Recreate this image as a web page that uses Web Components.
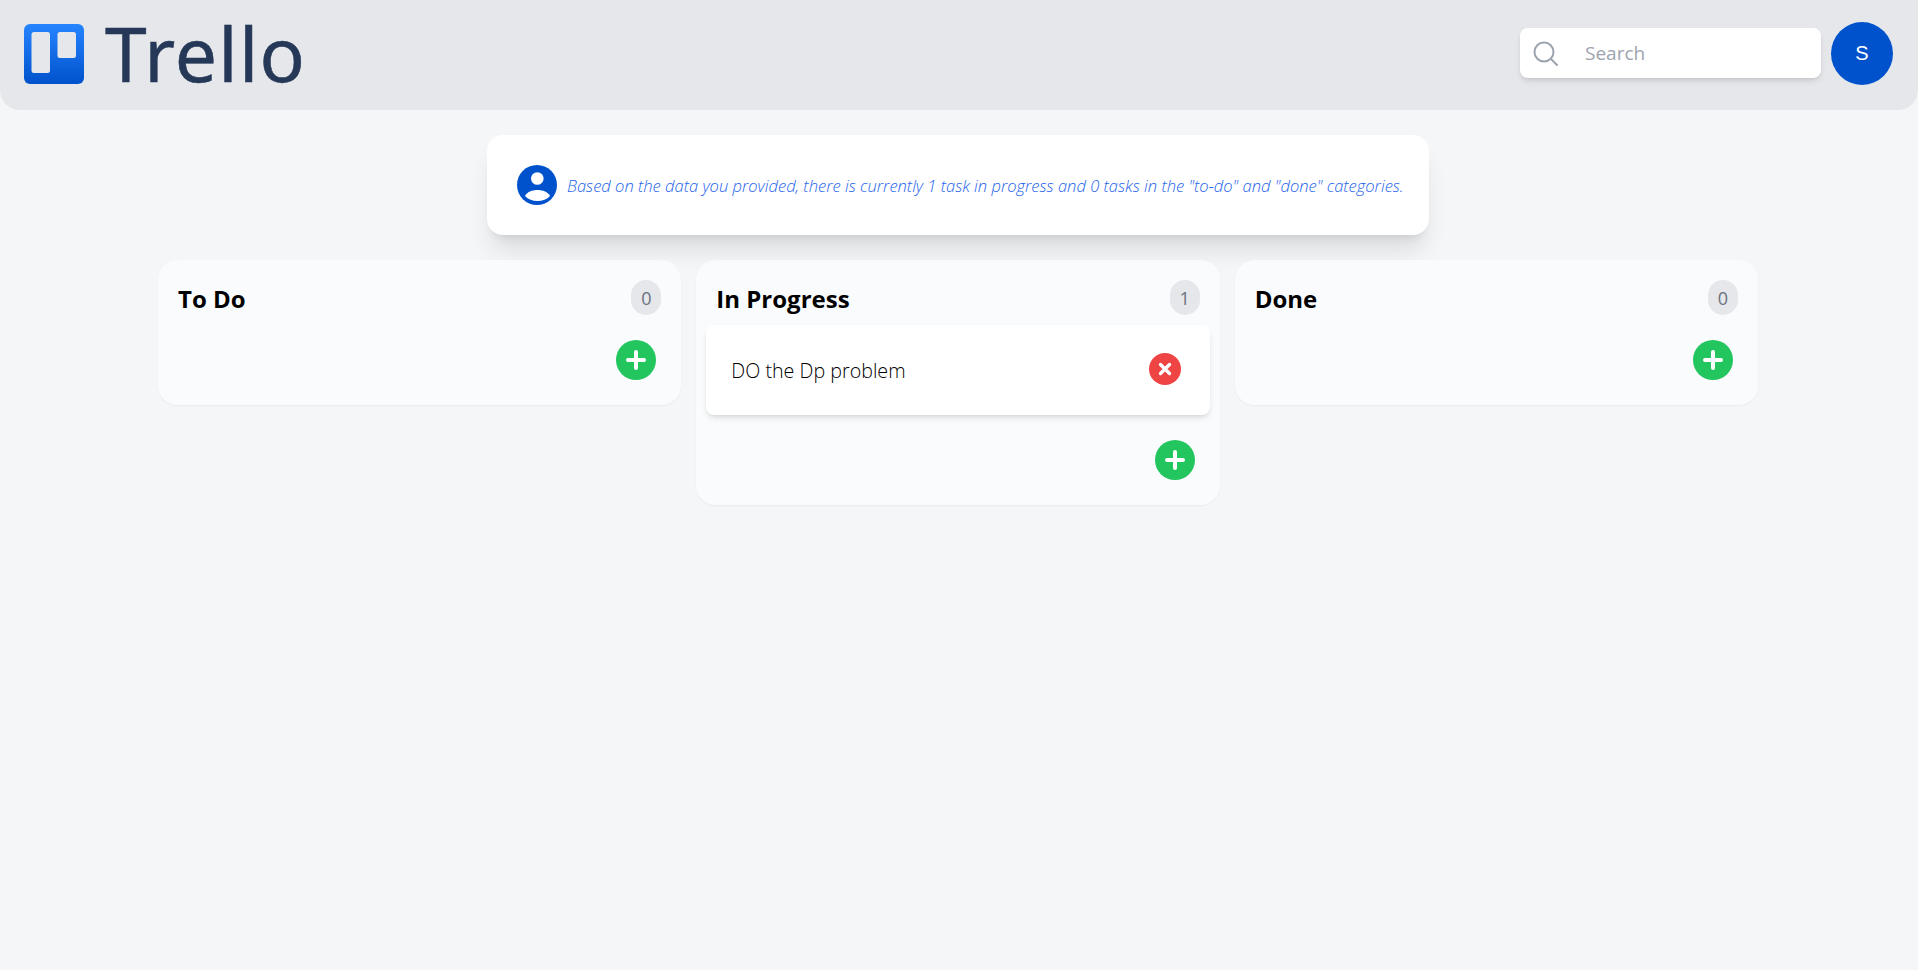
<!DOCTYPE html>
<html lang="en">
<head>
<meta charset="utf-8">
<title>Trello</title>
<style>
    html, body{margin: 0; padding: 0; height: 100%;}
    body{background: #f5f6f8; font-family: "Open Sans", "Noto Sans", sans-serif; color: #000;}
</style>
</head>
<body>
<board-app></board-app>

<script>
/** Logo y nombre de la aplicación. */
class BrandLogo extends HTMLElement{
    constructor(){
        super();
        this.attachShadow({mode: 'open'});
    }

    connectedCallback() {
        this.shadowRoot.innerHTML = `
            <style>
                :host{display: flex; align-items: center; gap: 21px; margin-top: 1px;}
                svg{display: block; width: 60px; height: 60px;}
                span{font: 400 75px/1 "Noto Sans", sans-serif; color: #253858; letter-spacing: 1.2px; margin-top: -2px;
                    -webkit-text-stroke: 0.5px #253858;}
            </style>
            <svg viewBox="0 0 60 60">
                <defs>
                    <linearGradient id="g" x1="0" y1="0" x2="0" y2="1">
                        <stop offset="0" stop-color="#2684ff"/>
                        <stop offset="1" stop-color="#0052cc"/>
                    </linearGradient>
                </defs>
                <rect width="60" height="60" rx="6" fill="url(#g)"/>
                <rect x="7.5" y="8" width="18.5" height="41" rx="2.5" fill="#e5e7eb"/>
                <rect x="33.5" y="8" width="18.5" height="26" rx="2.5" fill="#e5e7eb"/>
            </svg>
            <span>Trello</span>
        `;
    }
}
customElements.define('brand-logo', BrandLogo);

/** Caja de búsqueda de la barra superior. */
class SearchBox extends HTMLElement{
    constructor(){
        super();
        this.attachShadow({mode: 'open'});
    }

    connectedCallback() {
        this.shadowRoot.innerHTML = `
            <style>
                :host{display: flex; align-items: center; width: 301px; height: 50px; box-sizing: border-box; padding-left: 13px;
                    margin-bottom: 1px; background: #fff; border-radius: 8px;
                    box-shadow: 0 4px 6px -1px rgba(0,0,0,.1), 0 2px 4px -2px rgba(0,0,0,.1);}
                svg{display: block; flex: none; width: 25px; height: 25px;}
                input{flex: 1; min-width: 0; border: 0; outline: 0; background: none; margin-left: 27px; padding: 0;
                    font: 400 19px "Open Sans", sans-serif; color: #111827;}
                input::placeholder{color: #9ca3af; opacity: 1;}
            </style>
            <svg viewBox="0 0 25 25" fill="none" stroke="#9ca3af" stroke-width="2" stroke-linecap="round">
                <circle cx="11" cy="11" r="9.5"/>
                <path d="M18 18l6 6"/>
            </svg>
            <input type="text" placeholder="Search">
        `;
    }
}
customElements.define('search-box', SearchBox);

/** Barra superior. */
class TopBar extends HTMLElement{
    constructor(){
        super();
        this.attachShadow({mode: 'open'});
    }

    connectedCallback() {
        this.shadowRoot.innerHTML = `
            <style>
                :host{display: flex; align-items: center; justify-content: space-between; height: 110px; box-sizing: border-box;
                    padding: 0 25px 3px 24px; background: #e5e7eb; border-radius: 0 0 20px 20px;}
                .right{display: flex; align-items: center; gap: 10px;}
                .avatar{width: 62px; height: 63px; border-radius: 50%; background: #0052cc; color: #fff; display: flex;
                    align-items: center; justify-content: center; font: 400 20px "Liberation Sans", sans-serif;}
            </style>
            <brand-logo></brand-logo>
            <div class="right">
                <search-box></search-box>
                <div class="avatar">S</div>
            </div>
        `;
    }
}
customElements.define('top-bar', TopBar);

/** Tarjeta con el resumen de las tareas. */
class SummaryCard extends HTMLElement{
    constructor(){
        super();
        this.attachShadow({mode: 'open'});
    }

    connectedCallback() {
        this.shadowRoot.innerHTML = `
            <style>
                :host{display: flex; align-items: center; gap: 10px; width: 942px; height: 100px; box-sizing: border-box;
                    padding: 0 25px 0 30px; background: #fff; border-radius: 16px;
                    box-shadow: 0 20px 25px -5px rgba(0,0,0,.1), 0 8px 10px -6px rgba(0,0,0,.1);}
                svg{display: block; flex: none; width: 40px; height: 40px;}
                p{margin: 0; white-space: nowrap; font: italic 300 16.56px "Open Sans", sans-serif; color: #2563eb;}
            </style>
            <svg viewBox="0 0 40 40">
                <circle cx="20" cy="20" r="20" fill="#0052cc"/>
                <circle cx="20.3" cy="13.5" r="6.3" fill="#fff"/>
                <path d="M8 31C10 27 15 25 20.5 25C26 25 31 27 33 31C30 34.5 25.5 36 20.5 36C15.5 36 11 34.5 8 31Z" fill="#fff"/>
            </svg>
            <p><slot></slot></p>
        `;
    }
}
customElements.define('summary-card', SummaryCard);

/** Tarea individual de una columna. */
class TaskCard extends HTMLElement{
    constructor(){
        super();
        this.attachShadow({mode: 'open'});
    }

    connectedCallback() {
        this.shadowRoot.innerHTML = `
            <style>
                :host{display: flex; align-items: center; justify-content: space-between; height: 90px; box-sizing: border-box;
                    margin-bottom: 10px; padding: 0 29px 0 25px; background: #fff; border-radius: 8px;
                    box-shadow: 0 4px 6px -1px rgba(0,0,0,.1), 0 2px 4px -2px rgba(0,0,0,.1);}
                span{font: 300 19.7px "Open Sans", sans-serif; color: #000; margin-top: 1px;}
                svg{display: block; width: 32px; height: 32px; margin-top: -2px;}
            </style>
            <span><slot></slot></span>
            <svg viewBox="0 0 32 32">
                <circle cx="16" cy="16" r="16" fill="#ef4444"/>
                <path d="M11.5 11.5l9 9M20.5 11.5l-9 9" stroke="#fff" stroke-width="3.4" stroke-linecap="round"/>
            </svg>
        `;
    }
}
customElements.define('task-card', TaskCard);

/** Columna del tablero. Recibe las tareas por el slot. */
class TaskColumn extends HTMLElement{
    static get observedAttributes() {
        return ['titulo', 'cantidad'];
    }

    constructor(){
        super();
        this.attachShadow({mode: 'open'});
    }

    connectedCallback() {
        this.shadowRoot.innerHTML = `
            <style>
                :host{display: block; align-self: start; box-sizing: border-box; padding: 20px 10px 25px; border-radius: 20px;
                    background: rgba(252,253,255,.7); box-shadow: 0 1px 2px rgba(0,0,0,.05);}
                header{display: flex; align-items: flex-start; justify-content: space-between; height: 45px; padding: 0 10px 0 10px;}
                h2{margin: 3px 0 0; font: 700 24px/32px "Open Sans", sans-serif; color: #000;}
                .count{width: 30px; height: 35px; border-radius: 15px; background: #e5e7eb; color: #6b7280; display: flex;
                    align-items: center; justify-content: center; font: 400 18px "Open Sans", sans-serif;}
                .add{display: flex; justify-content: flex-end; padding: 15px 15px 0 0;}
                svg{display: block; width: 40px; height: 40px;}
            </style>
            <header>
                <h2>${this.getAttribute('titulo')}</h2>
                <span class="count">${this.getAttribute('cantidad')}</span>
            </header>
            <slot></slot>
            <div class="add">
                <svg viewBox="0 0 40 40">
                    <circle cx="20" cy="20" r="20" fill="#22c55e"/>
                    <path d="M20 12v16M12 20h16" stroke="#fff" stroke-width="4" stroke-linecap="round"/>
                </svg>
            </div>
        `;
    }
}
customElements.define('task-column', TaskColumn);

/** Página completa. */
class BoardApp extends HTMLElement{
    constructor(){
        super();
        this.attachShadow({mode: 'open'});
    }

    connectedCallback() {
        this.shadowRoot.innerHTML = `
            <style>
                :host{display: block;}
                .summary{display: flex; justify-content: center; margin-top: 25px; padding-right: 2px;}
                .board{display: grid; grid-template-columns: repeat(3, 1fr); gap: 15px; width: 1600px; margin: 25px 0 0 158px;}
            </style>
            <top-bar></top-bar>
            <div class="summary">
                <summary-card>Based on the data you provided, there is currently 1 task in progress and 0 tasks in the "to-do" and "done" categories.</summary-card>
            </div>
            <div class="board">
                <task-column titulo="To Do" cantidad="0"></task-column>
                <task-column titulo="In Progress" cantidad="1">
                    <task-card>DO the Dp problem</task-card>
                </task-column>
                <task-column titulo="Done" cantidad="0"></task-column>
            </div>
        `;
    }
}
customElements.define('board-app', BoardApp);
</script>
</body>
</html>
